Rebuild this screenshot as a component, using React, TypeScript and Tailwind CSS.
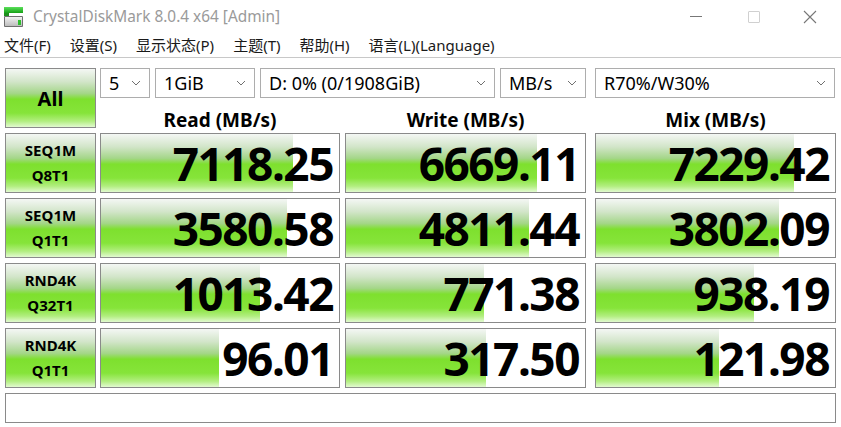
import React from "react"

// CrystalDiskMark main window: title bar, menu, settings row, results grid
const GREEN =
  "bg-[linear-gradient(180deg,#f4f7f4_0%,#d2e5c9_22%,#a4d688_42%,#7ee02e_52%,#86e43a_76%,#b2ee80_90%,#e2fad0_100%)]"

const MENU = ["文件(F)", "设置(S)", "显示状态(P)", "主题(T)", "帮助(H)", "语言(L)(Language)"]

type Cell = [string, number]
const ROWS: { top: string; bottom: string; cells: Cell[] }[] = [
  { top: "SEQ1M", bottom: "Q8T1", cells: [["7118.25", 0.807], ["6669.11", 0.8], ["7229.42", 0.828]] },
  { top: "SEQ1M", bottom: "Q1T1", cells: [["3580.58", 0.78], ["4811.44", 0.765], ["3802.09", 0.765]] },
  { top: "RND4K", bottom: "Q32T1", cells: [["1013.42", 0.668], ["771.38", 0.576], ["938.19", 0.66]] },
  { top: "RND4K", bottom: "Q1T1", cells: [["96.01", 0.496], ["317.50", 0.584], ["121.98", 0.513]] },
]

// left margin + width of each result column
const COLS = ["ml-[4px] w-[240px]", "ml-[5px] w-[241px]", "ml-[9px] w-[241px]"]
const HEAD_COLS = ["w-[240px]", "ml-[5px] w-[241px]", "ml-[9px] w-[241px]"]

function Chevron() {
  return (
    <svg width="10" height="6" viewBox="0 0 10 6" className="shrink-0">
      <polyline points="1,1 5,5 9,1" fill="none" stroke="#707070" strokeWidth="1" />
    </svg>
  )
}

function Select({ value, className }: { value: string; className: string }) {
  return (
    <div className={`flex h-[30px] items-center justify-between border border-[#adadad] bg-white pl-[8px] pr-[8px] text-[18px] text-black ${className}`}>
      <span className="leading-none">{value}</span>
      <Chevron />
    </div>
  )
}

function AppIcon() {
  return (
    <svg width="20" height="21" viewBox="0 0 20 21">
      <defs>
        <linearGradient id="lid" x1="0" y1="0" x2="0" y2="1">
          <stop offset="0" stopColor="#5be05b" />
          <stop offset="1" stopColor="#16a016" />
        </linearGradient>
        <linearGradient id="body" x1="0" y1="0" x2="0" y2="1">
          <stop offset="0" stopColor="#f2f2f2" />
          <stop offset="1" stopColor="#bdbdbd" />
        </linearGradient>
      </defs>
      <rect x="0" y="0" width="19" height="6" fill="url(#lid)" />
      <rect x="0" y="6" width="5" height="3" fill="#1d8f1d" />
      <rect x="0" y="9" width="19" height="11" rx="1" fill="#6f6f6f" />
      <rect x="1" y="10" width="17" height="9" fill="url(#body)" />
      <rect x="14" y="13" width="3" height="5" fill="#2fbf2f" />
    </svg>
  )
}

export default function App() {
  return (
    <div className="h-[427px] w-[841px] overflow-hidden bg-white font-[Noto_Sans,Noto_Sans_CJK_SC,sans-serif] text-black">
      {/* title bar */}
      <div className="flex h-[33px] items-center">
        <div className="ml-[4px] mt-[1px]">
          <AppIcon />
        </div>
        <span className="ml-[9px] text-[15.4px] text-[#9a9a9a]">CrystalDiskMark 8.0.4 x64 [Admin]</span>
        <div className="ml-auto flex items-center">
          <div className="flex w-[58px] justify-center">
            <div className="h-px w-[12px] bg-[#777]" />
          </div>
          <div className="flex w-[58px] justify-center">
            <div className="h-[12px] w-[12px] rounded-[1px] border border-[#d0d0d0]" />
          </div>
          <div className="flex w-[58px] justify-center pr-[4px]">
            <svg width="14" height="14" viewBox="0 0 14 14">
              <path d="M1 1 L13 13 M13 1 L1 13" stroke="#777" strokeWidth="1.1" />
            </svg>
          </div>
        </div>
      </div>

      {/* menu */}
      <div className="flex h-[25px] items-center gap-[19px] border-b border-[#c8c8c8] pl-[4px] text-[15px] text-[#1a1a1a]">
        {MENU.map(m => (
          <span key={m}>{m}</span>
        ))}
      </div>

      <div className="pl-[5px] pt-[10px]">
        {/* settings + headers */}
        <div className="flex">
          <div className={`flex h-[60px] w-[91px] items-center justify-center border border-[#8a8a8a] pt-[2px] ${GREEN}`}>
            <span className="text-[20px] font-bold">All</span>
          </div>
          <div className="ml-[4px] flex flex-col">
            <div className="flex">
              <Select value="5" className="w-[50px]" />
              <Select value="1GiB" className="ml-[5px] w-[100px]" />
              <Select value="D: 0% (0/1908GiB)" className="ml-[5px] w-[235px]" />
              <Select value="MB/s" className="ml-[5px] w-[86px]" />
              <Select value="R70%/W30%" className="ml-[9px] w-[240px]" />
            </div>
            <div className="flex h-[30px] items-end">
              {["Read (MB/s)", "Write (MB/s)", "Mix (MB/s)"].map((h, i) => (
                <div key={h} className={`${HEAD_COLS[i]} text-center text-[19px] font-bold leading-[16px]`}>
                  {h}
                </div>
              ))}
            </div>
          </div>
        </div>

        {/* results */}
        <div className="mt-[5px] flex flex-col gap-[5px]">
          {ROWS.map(r => (
            <div key={r.top + r.bottom} className="flex">
              <div className={`flex h-[60px] w-[91px] flex-col items-center justify-center border border-[#8a8a8a] text-[15px] font-bold leading-[25px] ${GREEN}`}>
                <span>{r.top}</span>
                <span>{r.bottom}</span>
              </div>
              {r.cells.map(([v, f], i) => (
                <div key={i} className={`relative flex h-[60px] items-center justify-end overflow-hidden border border-[#8a8a8a] bg-white pr-[6px] ${COLS[i]}`}>
                  <div className={`absolute inset-y-0 left-0 ${GREEN}`} style={{ width: `${f * 100}%` }} />
                  <span className="relative text-[46px] font-bold leading-none tracking-[-1.5px]">{v}</span>
                </div>
              ))}
            </div>
          ))}
        </div>

        {/* status line */}
        <div className="mt-[5px] h-[30px] w-[831px] border border-[#8a8a8a] bg-white" />
      </div>
    </div>
  )
}
